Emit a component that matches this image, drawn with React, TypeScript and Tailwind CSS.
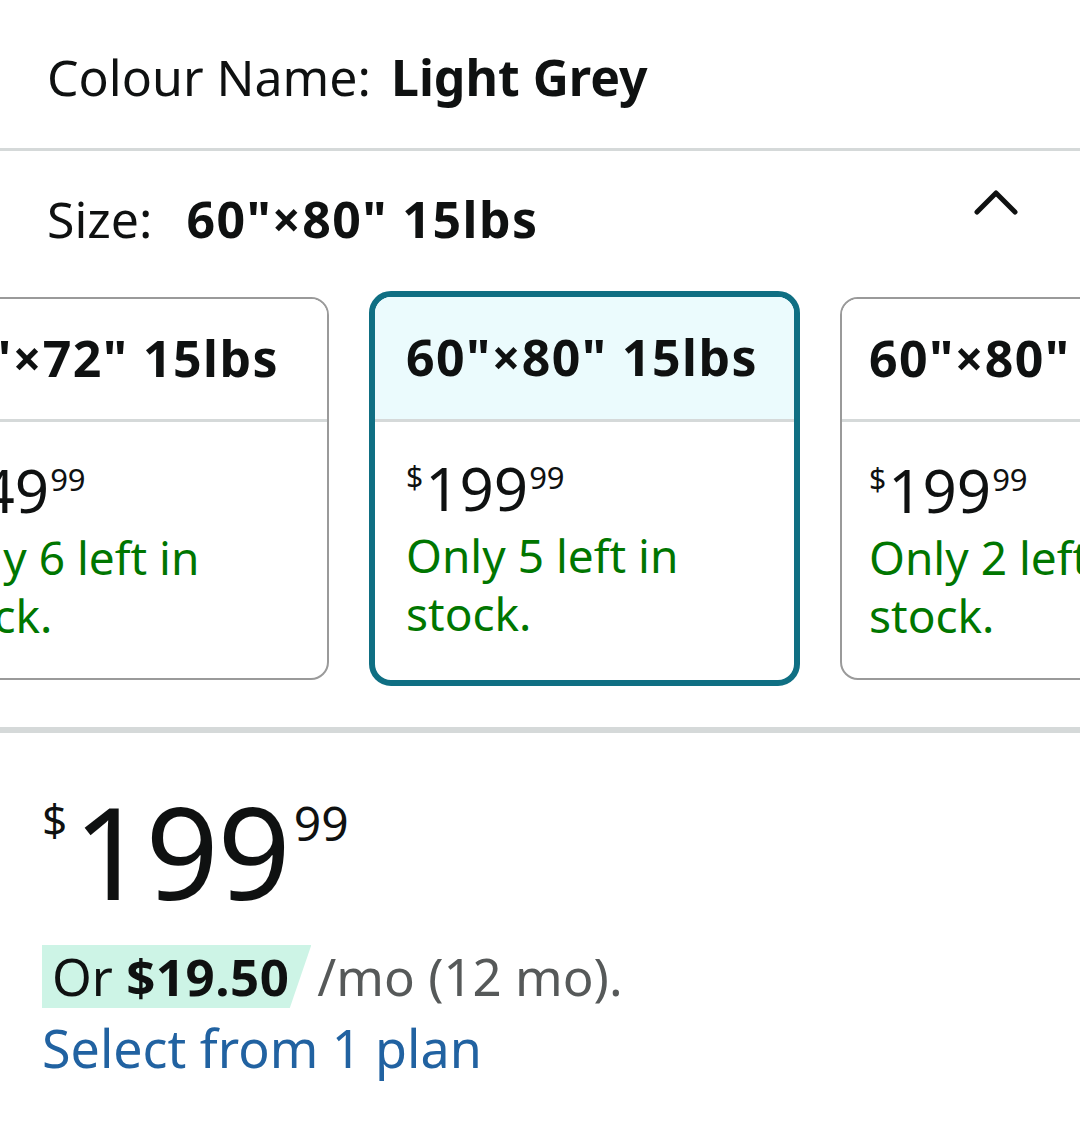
import React from "react";

const font = { fontFamily: '"Noto Sans", "Open Sans", Arial, sans-serif' };

function Card({
  title,
  dollars,
  stock,
  selected,
}: {
  title: string;
  dollars: string;
  stock: string;
  selected?: boolean;
}) {
  return (
    <div
      className={
        selected
          ? "shrink-0 w-[431px] h-[395px] rounded-[22px] border-[6px] border-[#0f6f83] overflow-hidden bg-white -mt-[6px]"
          : "shrink-0 w-[431px] h-[383px] rounded-[18px] border-2 border-[#9a9a9a] overflow-hidden bg-white"
      }
    >
      <div
        className={
          (selected ? "bg-[#ebfbfd] h-[125px] pl-[31px]" : "bg-white h-[123px] pl-[27px]") +
          " flex items-center border-b-[3px] border-[#d5d9d9]"
        }
      >
        <span className="text-[50px] font-bold text-[#0f1111] tracking-[1.5px] whitespace-nowrap leading-none -mt-[2px]">
          {title}
        </span>
      </div>
      <div className={selected ? "pl-[31px] pt-[36px]" : "pl-[27px] pt-[38px]"}>
        <div className="flex items-start text-[#0f1111] leading-none">
          <span className="text-[30px] mt-[4px] mr-[2px]">$</span>
          <span className="text-[60px]">{dollars}</span>
          <span className="text-[31px] mt-[4px] ml-[1px]">99</span>
        </div>
        <div className="text-[#007600] text-[46px] leading-[58px] mt-[8px] w-[300px]">
          {stock}
        </div>
      </div>
    </div>
  );
}

export default function App() {
  return (
    <div className="w-[1080px] h-[1138px] bg-white overflow-hidden" style={font}>
      <div className="h-[148px] pl-[47px] pt-[52px]">
        <span className="text-[50px] text-[#0f1111] leading-none">
          Colour Name:<span className="inline-block w-[20px]" />
          <span className="font-bold">Light Grey</span>
        </span>
      </div>
      <div className="h-[3px] bg-[#d5d9d9]" />
      <div className="h-[146px] pl-[47px] pr-[62px] flex items-start justify-between pt-[43px]">
        <span className="text-[50px] text-[#0f1111] leading-none">
          Size:<span className="inline-block w-[34px]" />
          <span className="font-bold tracking-[1.5px]">60"×80" 15lbs</span>
        </span>
        <svg width="44" height="28" viewBox="0 0 44 28" className="-mt-[6px]">
          <path d="M3 24 L22 5 L41 24" fill="none" stroke="#0f1111" strokeWidth="5" strokeLinecap="round" strokeLinejoin="round" />
        </svg>
      </div>
      <div className="flex gap-[40px] -ml-[102px] h-[430px]">
        <Card title={'60"×72" 15lbs'} dollars="149" stock="Only 6 left in stock." />
        <Card title={'60"×80" 15lbs'} dollars="199" stock="Only 5 left in stock." selected />
        <Card title={'60"×80" 20lbs'} dollars="199" stock="Only 2 left in stock." />
      </div>
      <div className="h-[6px] bg-[#d5d9d9]" />
      <div className="pl-[42px] pt-[58px]">
        <div className="flex items-start text-[#0f1111] leading-none">
          <span className="text-[44px] mt-[6px] mr-[6px]">$</span>
          <span className="text-[128px] tracking-[-1px] leading-[120px]">199</span>
          <span className="text-[48px] mt-[8px] ml-[4px]">99</span>
        </div>
        <div className="mt-[40px] flex items-end text-[51px] leading-none">
          <span className="relative inline-block">
            <span
              className="absolute left-0 top-[-6px] bottom-[-6px] right-[-22px] bg-[#cdf4e6]"
              style={{ clipPath: "polygon(0 0, 100% 0, 92% 100%, 0 100%)" }}
            />
            <span className="relative pl-[10px] text-[#0f1111]">
              Or <span className="font-bold tracking-[0.5px]">$19.50</span>
            </span>
          </span>
          <span className="text-[#565959] ml-[28px]">/mo (12 mo).</span>
        </div>
        <div className="mt-[20px] text-[52px] leading-none text-[#2162a1]">Select from 1 plan</div>
      </div>
    </div>
  );
}
